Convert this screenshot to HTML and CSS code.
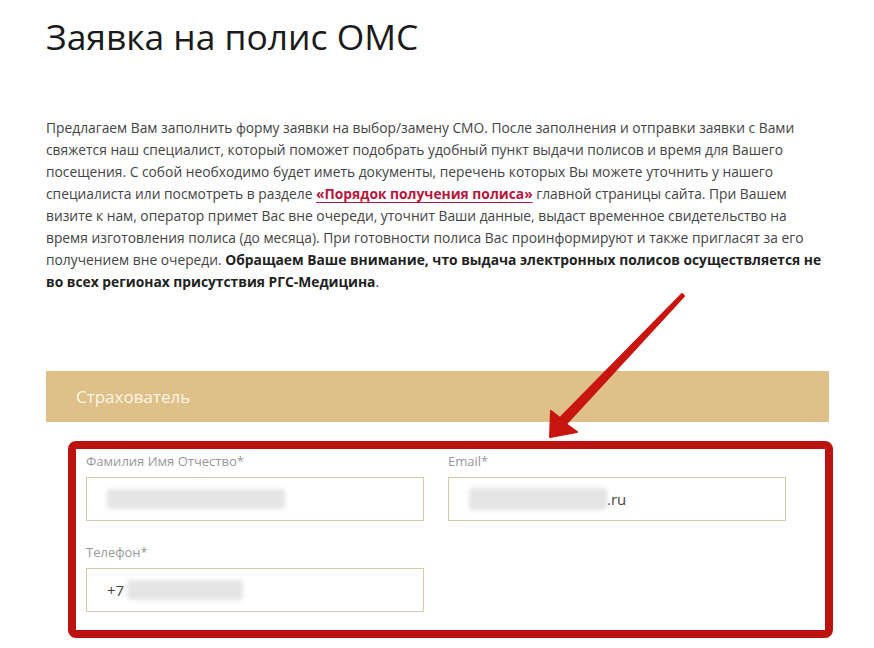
FILE: index.html
```html
<!DOCTYPE html>
<html lang="ru">
<head>
    <meta charset="UTF-8">
    <meta name="viewport" content="width=device-width, initial-scale=1.0">
    <title>Заявка на полис ОМС</title>

    <link rel="stylesheet" href="styles.css">
</head>
<body>

    <div class="page">
        <h1 class="page-title">Заявка на полис ОМС</h1>

        <p class="intro">
            Предлагаем Вам заполнить форму заявки на выбор/замену СМО. После заполнения и отправки заявки с Вами
            свяжется наш специалист, который поможет подобрать удобный пункт выдачи полисов и время для Вашего
            посещения. С собой необходимо будет иметь документы, перечень которых Вы можете уточнить у нашего
            специалиста или посмотреть в разделе <a href="#">«Порядок получения полиса»</a> главной страницы сайта. При Вашем
            визите к нам, оператор примет Вас вне очереди, уточнит Ваши данные, выдаст временное свидетельство на
            время изготовления полиса (до месяца). При готовности полиса Вас проинформируют и также пригласят за его
            получением вне очереди. <strong>Обращаем Ваше внимание, что выдача электронных полисов осуществляется не
            во всех регионах присутствия РГС-Медицина</strong>.
        </p>

        <div class="section-head">Страхователь</div>

        <form class="insurer-form">
            <div class="field">
                <label>Фамилия Имя Отчество*</label>
                <div class="input-box">
                    <span class="blur blur-name"></span>
                </div>
            </div>
            <div class="field">
                <label>Email*</label>
                <div class="input-box">
                    <span class="blur blur-mail"></span>.ru
                </div>
            </div>
            <div class="field">
                <label>Телефон*</label>
                <div class="input-box">
                    +7<span class="blur blur-phone"></span>
                </div>
            </div>
        </form>
    </div>

    <!-- annotation: red frame + arrow -->
    <svg class="annotation" width="874" height="648" viewBox="0 0 874 648">
        <rect x="72" y="445" width="757" height="189" rx="4" fill="none" stroke="#bb1410" stroke-width="8"/>
        <polygon points="684,296 566,424 577,432 550,437 551,411 560,418 682,294"
                 fill="#c8150f" stroke="#c8150f" stroke-width="2" stroke-linejoin="round"/>
    </svg>

</body>
</html>
```

FILE: styles.css
```css
body {
    font-family: "Open Sans", "Liberation Sans", sans-serif;
    background-color: #fff;
    color: #444;
    margin: 0;
    padding: 0;
}

.page {
    width: 783px;
    padding: 0 0 0 46px;
}

.page-title {
    font-size: 35.4px;
    font-weight: 400;
    color: #1a1a1a;
    margin: 0;
    padding-top: 11px;
    line-height: 50px;
}

.intro {
    font-size: 13.8px;
    line-height: 22px;
    margin: 56px 0 0 0;
    width: 783px;
}

.intro a {
    color: #b8163c;
    font-weight: bold;
    text-decoration: underline;
    text-underline-offset: 3px;
}

.intro strong {
    color: #222;
}

.section-head {
    margin-top: 78px;
    height: 51px;
    line-height: 51px;
    background-color: #dfc088;
    color: #fdf6e8;
    font-size: 17px;
    padding-left: 30px;
}

.insurer-form {
    display: grid;
    grid-template-columns: 338px 338px;
    column-gap: 24px;
    row-gap: 22px;
    padding: 30px 0 0 40px;
}

.field label {
    display: block;
    font-size: 13px;
    line-height: 18px;
    color: #999;
    margin-bottom: 7px;
}

.input-box {
    height: 44px;
    box-sizing: border-box;
    border: 1px solid #d8caa6;
    padding-left: 20px;
    display: flex;
    align-items: center;
    font-size: 15px;
    color: #444;
}

.blur {
    display: inline-block;
    height: 20px;
    background-color: #e4e4e4;
    border-radius: 4px;
    filter: blur(2px);
}

.blur-name {
    width: 178px;
}

.blur-mail {
    width: 138px;
    height: 22px;
}

.blur-phone {
    width: 116px;
    margin-left: 3px;
}

.annotation {
    position: absolute;
    top: 0;
    left: 0;
    pointer-events: none;
}
```
